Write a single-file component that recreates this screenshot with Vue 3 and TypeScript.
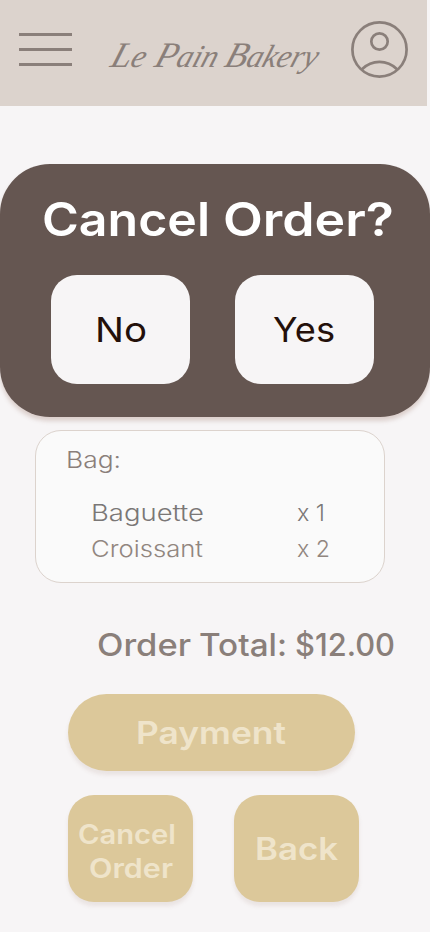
<script setup lang="ts">
import { h, type FunctionalComponent } from 'vue'

interface FitProps {
  text: string
  width: number
  size: number
}

// One line of text stretched to a fixed width, centred on its cap height.
const FitText: FunctionalComponent<FitProps> = ({ text, width, size }) =>
  h('svg', { width, height: size, overflow: 'visible', style: { display: 'block', flex: 'none' } }, [
    h(
      'text',
      {
        x: 0,
        y: size * 0.8636,
        textLength: width,
        lengthAdjust: 'spacingAndGlyphs',
        'font-size': size,
        fill: 'currentColor',
      },
      text,
    ),
  ])
FitText.props = ['text', 'width', 'size']

const brand = [
  { cap: 'L', rest: 'e', x: 0, width: 34 },
  { cap: 'P', rest: 'ain', x: 44, width: 62 },
  { cap: 'B', rest: 'akery', x: 114, width: 92 },
]

const items = [
  { name: 'Baguette', nameWidth: 113, qty: 'x 1', qtyWidth: 28, tone: 'dark' },
  { name: 'Croissant', nameWidth: 112, qty: 'x 2', qtyWidth: 33, tone: 'light' },
]
</script>

<template>
  <main class="screen">
    <header class="header">
      <button class="menu" aria-label="Menu"><i></i><i></i><i></i></button>
      <svg class="brand" width="212" height="50" overflow="visible">
        <text
          v-for="word in brand"
          :key="word.cap"
          :x="word.x"
          y="36"
          :textLength="word.width"
          lengthAdjust="spacingAndGlyphs"
        >{{ word.cap }}<tspan class="small">{{ word.rest }}</tspan></text>
      </svg>
      <svg class="profile" width="58" height="58" viewBox="0 0 58 58">
        <circle cx="29.5" cy="29.5" r="27.1" />
        <circle cx="29.5" cy="21.5" r="8.2" />
        <path d="M11.9 49.2Q19.5 41.8 29.5 41.8T47.1 49.2" />
      </svg>
    </header>

    <section class="dialog">
      <h1>
        <FitText text="Cancel" :width="168" :size="46.2" />
        <FitText text="Order?" :width="171" :size="46.2" />
      </h1>
      <div class="choices">
        <button><FitText text="No" :width="52" :size="34.6" /></button>
        <button><FitText text="Yes" :width="62" :size="34.6" /></button>
      </div>
    </section>

    <section class="bag">
      <h2><FitText text="Bag:" :width="55" :size="23" /></h2>
      <div v-for="item in items" :key="item.name" class="item" :class="item.tone">
        <FitText :text="item.name" :width="item.nameWidth" :size="23" />
        <FitText :text="item.qty" :width="item.qtyWidth" :size="23" />
      </div>
    </section>

    <div class="total">
      <FitText text="Order" :width="94" :size="31" />
      <FitText text="Total:" :width="88" :size="31" />
      <FitText text="$12.00" :width="100" :size="31" />
    </div>

    <button class="action payment"><FitText text="Payment" :width="150" :size="31" /></button>
    <div class="actions">
      <button class="action cancel">
        <FitText text="Cancel" :width="98" :size="27" />
        <FitText class="second" text="Order" :width="84" :size="27" />
      </button>
      <button class="action back"><FitText text="Back" :width="83" :size="31" /></button>
    </div>
  </main>
</template>

<style>
body {
  background: #f7f5f6;
}
</style>

<style scoped>
.screen {
  width: 430px;
  height: 932px;
  overflow: hidden;
  background: #f7f5f6;
  font-family: Inter, 'Open Sans', sans-serif;
  color: #8a7f7a;
}
button {
  border: 0;
  padding: 0;
  font-family: inherit;
  display: flex;
  align-items: center;
  justify-content: center;
}
h1,
h2 {
  margin: 0;
}
.header {
  display: flex;
  align-items: flex-start;
  box-sizing: border-box;
  width: 427px;
  height: 106px;
  padding-left: 19px;
  background: #dcd3cd;
}
.menu {
  flex-direction: column;
  gap: 12px;
  width: 53px;
  margin-top: 33px;
  background: none;
}
.menu i {
  width: 53px;
  height: 3px;
  background: #8a7f7a;
}
.brand {
  margin: 31px 0 0 37px;
  font: italic 36px 'Liberation Serif', serif;
  fill: #8a7f7a;
}
.brand text {
  transform: skewX(-18deg);
  transform-origin: 0 36px;
}
.brand .small {
  font-size: 32px;
}
.profile {
  margin: 20px 0 0 29px;
  fill: none;
  stroke: #8a7f7a;
  stroke-width: 2.7;
}
.dialog {
  box-sizing: border-box;
  height: 253px;
  margin-top: 58px;
  padding: 32px 0 0;
  border-radius: 50px;
  background: #655651;
  box-shadow: 0 4px 4px rgba(140, 95, 80, 0.25);
}
.dialog h1 {
  display: flex;
  gap: 13px;
  margin-left: 42px;
  height: 46px;
  color: #fff;
  font-weight: 560;
}
.choices {
  display: flex;
  gap: 45px;
  padding: 33px 0 0 51px;
}
.choices button {
  width: 139px;
  height: 109px;
  border-radius: 26px;
  background: #f7f5f6;
  color: #24100a;
  font-weight: 430;
}
.choices button + button {
  padding-right: 1px;
  box-sizing: border-box;
}
.bag {
  box-sizing: border-box;
  width: 350px;
  height: 153px;
  margin: 13px 0 0 35px;
  padding: 17px 0 0 30px;
  border: 1px solid #dcd3cd;
  border-radius: 26px;
  background: #fafafa;
}
.bag h2 {
  margin-bottom: 30px;
  font-weight: 300;
}
.item {
  display: grid;
  grid-template-columns: 206px auto;
  justify-content: start;
  height: 36px;
  padding-left: 25px;
  font-weight: 300;
}
.item.dark {
  color: #7a7776;
}
.item.light {
  color: #91867f;
}
.total {
  display: flex;
  gap: 8px;
  padding: 45.5px 0 0 97px;
  height: 65.5px;
  font-weight: 450;
}
.action {
  background: #dcc89a;
  color: #efe4ca;
  font-weight: 560;
  border-radius: 26px;
  box-shadow: 0 4px 4px rgba(140, 95, 80, 0.12);
}
.payment {
  box-sizing: border-box;
  width: 287px;
  height: 77px;
  margin-left: 68px;
  padding-right: 2px;
  border-radius: 38.5px;
}
.actions {
  display: flex;
  gap: 41px;
  padding: 24px 0 0 68px;
}
.actions .action {
  width: 125px;
  height: 107px;
}
.actions .cancel {
  flex-direction: column;
  gap: 7px;
  padding: 5px 7px 0 0;
}
.second {
  margin-left: 8px;
}
</style>
